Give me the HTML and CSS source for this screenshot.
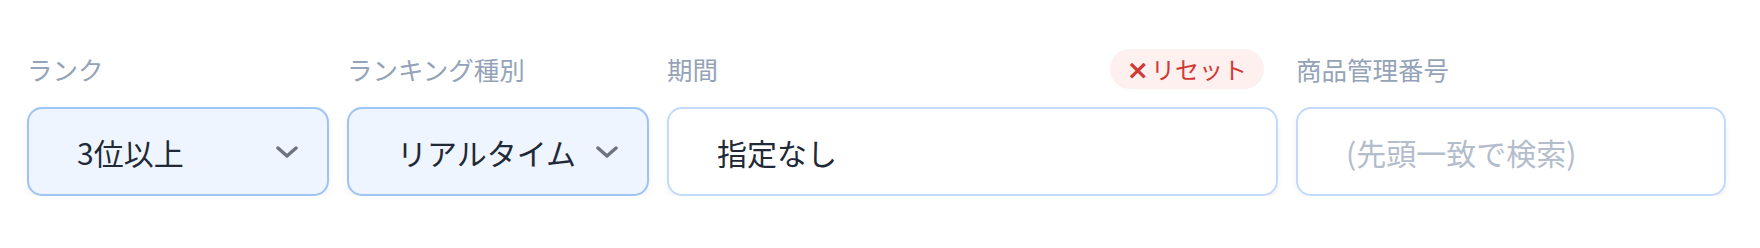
FILE: index.html
```html
<!DOCTYPE html>
<html lang="ja">
<head>
<meta charset="utf-8">
<title>ランキング検索</title>
<link rel="stylesheet" href="styles.css">
</head>
<body>
<form class="filters">
  <div class="field">
    <div class="head"><span class="label">ランク</span></div>
    <div class="control select">
      <span class="value">3位以上</span>
      <svg class="chevron" width="22" height="12" viewBox="0 0 22 12"><polyline points="2,2 11,10 20,2"/></svg>
    </div>
  </div>
  <div class="field">
    <div class="head"><span class="label">ランキング種別</span></div>
    <div class="control select">
      <span class="value">リアルタイム</span>
      <svg class="chevron" width="22" height="12" viewBox="0 0 22 12"><polyline points="2,2 11,10 20,2"/></svg>
    </div>
  </div>
  <div class="field">
    <div class="head">
      <span class="label">期間</span>
      <button type="button" class="reset"><span class="x">×</span>リセット</button>
    </div>
    <div class="control input">
      <span class="value">指定なし</span>
    </div>
  </div>
  <div class="field">
    <div class="head"><span class="label">商品管理番号</span></div>
    <div class="control input">
      <span class="placeholder">(先頭一致で検索)</span>
    </div>
  </div>
</form>
</body>
</html>
```

FILE: styles.css
```css
html, body {
  margin: 0;
  padding: 0;
  background: #ffffff;
}

body {
  font-family: "Noto Sans CJK JP", "Noto Sans", sans-serif;
}

.filters {
  display: grid;
  grid-template-columns: 302fr 302fr 611fr 430fr;
  column-gap: 18px;
  padding: 49px 34px 0 27px;
  margin: 0;
}

.field {
  display: flex;
  flex-direction: column;
  min-width: 0;
}

.head {
  display: flex;
  align-items: center;
  justify-content: space-between;
  height: 40px;
  margin-bottom: 18px;
}

.label {
  font-size: 25.5px;
  line-height: 1;
  color: #94a3b8;
  font-weight: 400;
  white-space: nowrap;
}

.reset {
  display: inline-flex;
  align-items: center;
  height: 40px;
  padding: 0 17px 0 16px;
  margin-right: 14px;
  border: none;
  border-radius: 20px;
  background: #fdf0ef;
  color: #d03a35;
  font-family: "Noto Sans CJK JP", sans-serif;
  font-size: 24px;
  font-weight: 400;
  line-height: 1;
  cursor: pointer;
}

.reset .x {
  font-family: "DejaVu Sans", sans-serif;
  font-weight: 700;
  font-size: 27px;
  margin-right: 2px;
}

.control {
  box-sizing: border-box;
  height: 89px;
  display: flex;
  align-items: center;
  justify-content: space-between;
  padding: 0 29px 0 48px;
  border-radius: 15px;
  box-shadow: 0 3px 6px rgba(30, 41, 59, 0.06);
  font-size: 30px;
  line-height: 1;
  white-space: nowrap;
}

.select {
  background: #eff5fe;
  border: 2px solid #9cc4f6;
}

.input {
  background: #ffffff;
  border: 2px solid #c2dafb;
}

.value {
  color: #1f2937;
}

.placeholder {
  color: #b3bdcc;
}

.chevron {
  flex: none;
}

.chevron polyline {
  fill: none;
  stroke: #6b7280;
  stroke-width: 3.4;
  stroke-linecap: round;
  stroke-linejoin: round;
}
```
